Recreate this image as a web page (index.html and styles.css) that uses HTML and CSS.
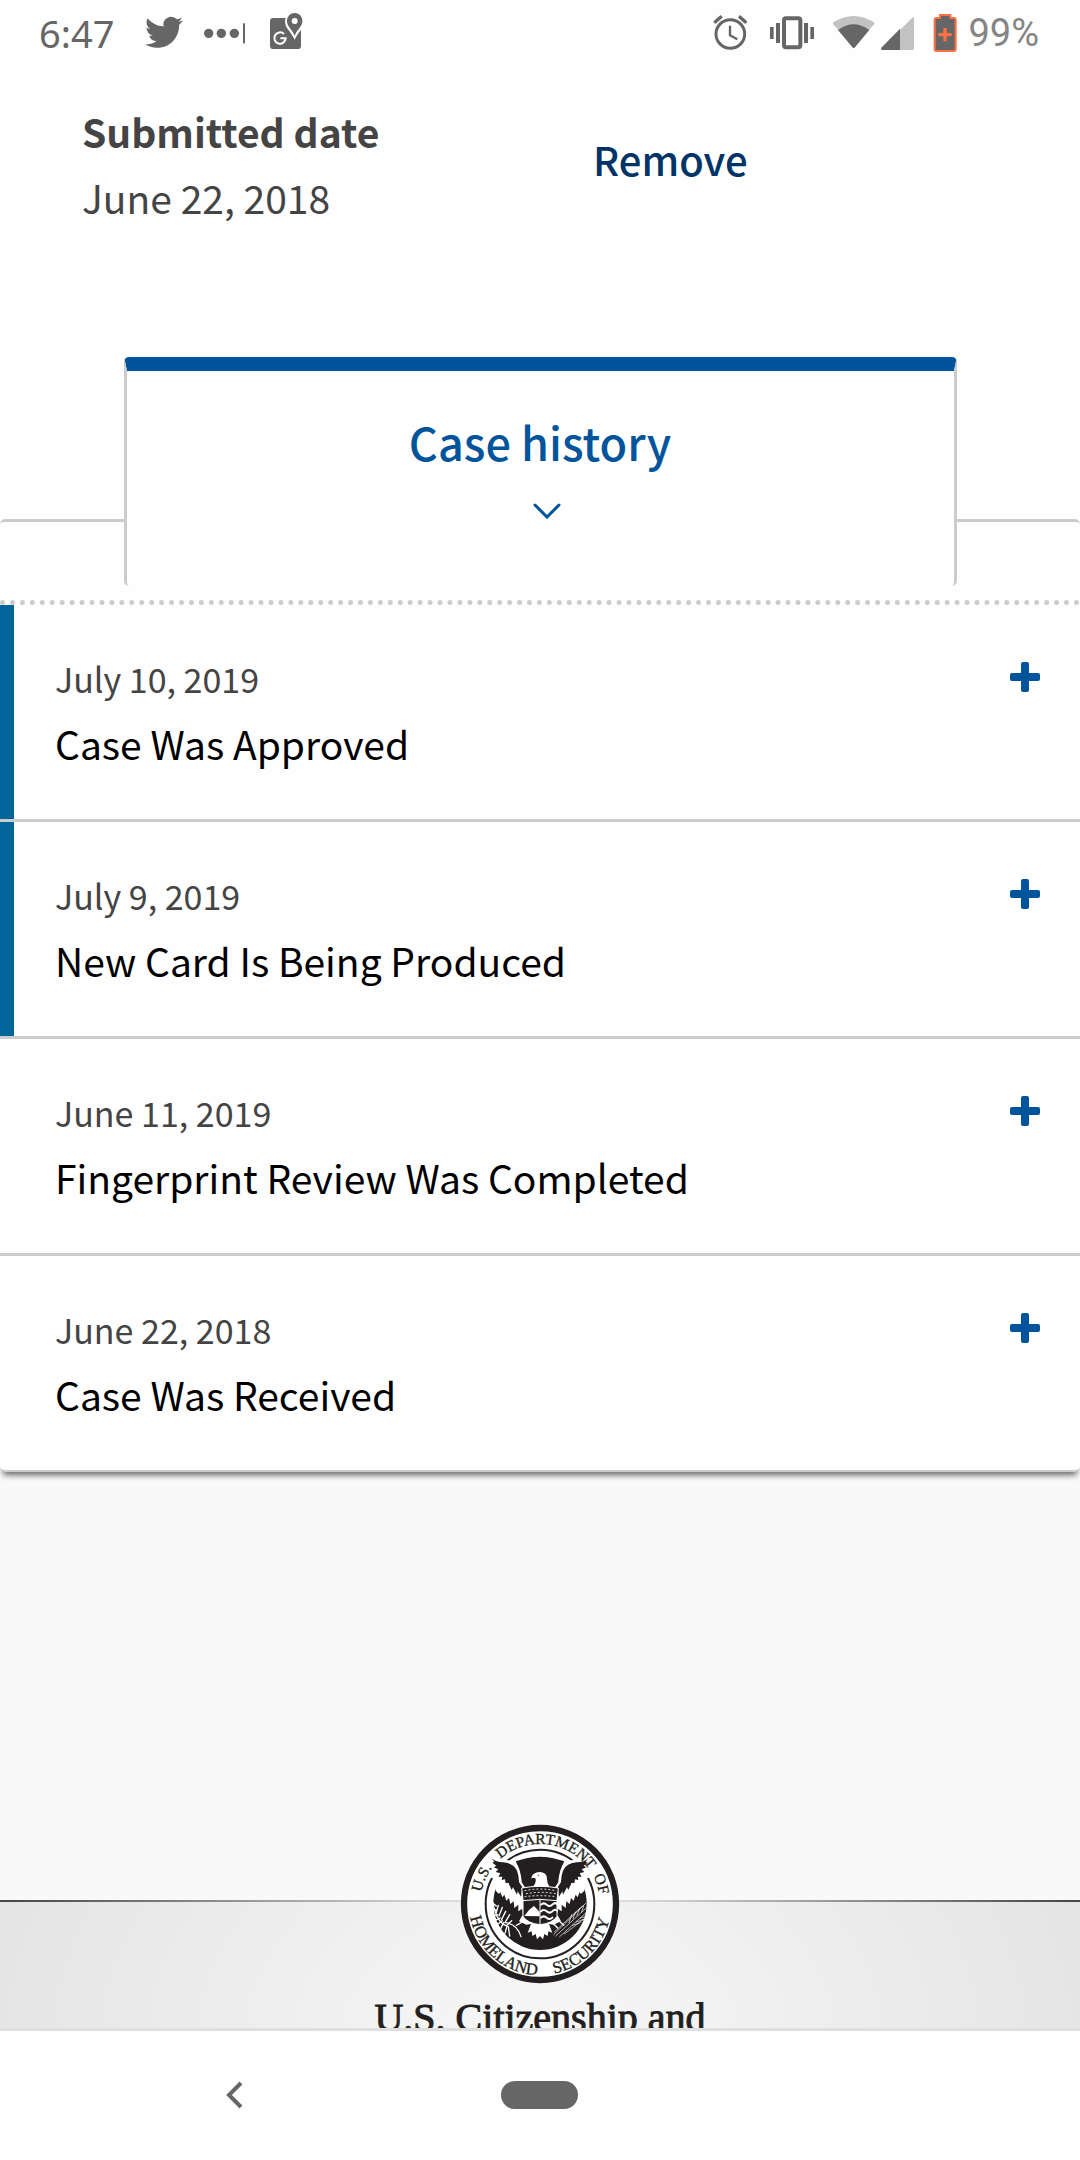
FILE: index.html
```html
<!DOCTYPE html>
<html lang="en">
<head>
<meta charset="utf-8">
<meta name="viewport" content="width=device-width, initial-scale=1">
<title>Case status</title>
<link rel="stylesheet" href="styles.css">
</head>
<body>
<div class="status">
  <div class="status-group status-left">
    <span class="clock">6:47</span>
    <svg class="ico w50" viewBox="405 30 150 132"><path transform="translate(438 40) scale(4.75)" d="M23.953 4.57a10 10 0 01-2.825.775 4.958 4.958 0 002.163-2.723c-.951.555-2.005.959-3.127 1.184a4.92 4.92 0 00-8.384 4.482C7.69 8.095 4.067 6.13 1.64 3.162a4.822 4.822 0 00-.666 2.475c0 1.71.87 3.213 2.188 4.096a4.904 4.904 0 01-2.228-.616v.06a4.923 4.923 0 003.946 4.827 4.996 4.996 0 01-2.212.085 4.936 4.936 0 004.604 3.417 9.867 9.867 0 01-6.102 2.105c-.39 0-.779-.023-1.17-.067a13.995 13.995 0 007.557 2.209c9.053 0 13.998-7.496 13.998-13.985 0-.21 0-.42-.015-.63A9.935 9.935 0 0024 4.59z"/></svg>
    <svg class="ico w42" viewBox="615 30 126 132"><circle cx="629" cy="100" r="14"/><circle cx="667" cy="100" r="14"/><circle cx="706" cy="100" r="14"/><rect x="732" y="70" width="6" height="60"/></svg>
    <svg class="ico w40" viewBox="801 30 120 132">
      <rect x="813" y="54" width="93" height="93" rx="10"/>
      <path class="knock" d="M887 34a28 28 0 0 0-29 29c0 22 15 28 29 56 14-28 29-34 29-56a28 28 0 0 0-29-29z"/>
      <path d="M887 39a23 23 0 0 0-23 24c0 18 14 22 23 44 9-22 23-26 23-44a23 23 0 0 0-23-24z"/>
      <circle class="knock" cx="887" cy="63" r="9"/>
      <path class="cut" d="M855 102a17 17 0 1 0 5 13h-16"/>
    </svg>
  </div>
  <div class="status-group status-right">
    <svg class="ico w50" viewBox="198 30 150 132"><g class="line"><circle cx="271" cy="102" r="43" stroke-width="9"/><path stroke-width="7" d="M270 77v29l22 12"/><path stroke-width="10" d="M223 68l22-19M319 68l-22-19"/></g></svg>
    <svg class="ico w56" viewBox="372 30 168 132"><rect class="line" x="432" y="55" width="49" height="87" rx="6" stroke-width="12"/><path d="M408 69h12v60h-12zM390 81h11v36h-11zM492 69h12v60h-12zM511 81h11v36h-11z"/></svg>
    <svg class="ico w90" viewBox="564 30 270 132"><path class="dim" d="M579 72Q577 68 581 66Q641 30 701 66Q705 68 703 72L686 91H596z"/><path d="M594 90Q641 56 688 90L645 142Q641 147 637 142z"/><path class="dim" d="M780 90L818 52Q822 50 822 55V145Q822 150 817 150H780z"/><path d="M780 86V150H726Q721 149 724 143z"/></svg>
    <svg class="ico w34" viewBox="858 30 102 132"><path class="batt" d="M900 45h31v9h11q5 0 5 5v89q0 5-5 5h-53q-5 0-5-5V59q0-5 5-5h11z"/><path class="spark" d="M910 84h10v15h15v10h-15v15h-10v-15h-15V99h15z"/></svg>
    <span class="percent">99%</span>
  </div>
</div>

<main class="screen">
  <section class="case">
    <div class="summary">
      <dl class="submitted"><dt>Submitted date</dt><dd>June 22, 2018</dd></dl>
      <button class="remove" type="button">Remove</button>
    </div>
    <div class="panel">
      <button class="tab" type="button" aria-expanded="true">
        <span>Case history</span>
        <svg class="chevron" viewBox="0 0 28 16"><path d="M2 2l12 12L26 2"/></svg>
      </button>
      <ul class="history">
        <li class="entry recent"><button class="toggle" type="button"><span class="text"><span class="date">July 10, 2019</span><span class="event">Case Was Approved</span></span><svg class="plus" viewBox="0 0 30 30"><path d="M13 0h4q2 0 2 2v9h9q2 0 2 2v4q0 2-2 2h-9v9q0 2-2 2h-4q-2 0-2-2v-9H2q-2 0-2-2v-4q0-2 2-2h9V2q0-2 2-2z"/></svg></button></li>
        <li class="entry recent"><button class="toggle" type="button"><span class="text"><span class="date">July 9, 2019</span><span class="event">New Card Is Being Produced</span></span><svg class="plus" viewBox="0 0 30 30"><path d="M13 0h4q2 0 2 2v9h9q2 0 2 2v4q0 2-2 2h-9v9q0 2-2 2h-4q-2 0-2-2v-9H2q-2 0-2-2v-4q0-2 2-2h9V2q0-2 2-2z"/></svg></button></li>
        <li class="entry"><button class="toggle" type="button"><span class="text"><span class="date">June 11, 2019</span><span class="event">Fingerprint Review Was Completed</span></span><svg class="plus" viewBox="0 0 30 30"><path d="M13 0h4q2 0 2 2v9h9q2 0 2 2v4q0 2-2 2h-9v9q0 2-2 2h-4q-2 0-2-2v-9H2q-2 0-2-2v-4q0-2 2-2h9V2q0-2 2-2z"/></svg></button></li>
        <li class="entry"><button class="toggle" type="button"><span class="text"><span class="date">June 22, 2018</span><span class="event">Case Was Received</span></span><svg class="plus" viewBox="0 0 30 30"><path d="M13 0h4q2 0 2 2v9h9q2 0 2 2v4q0 2-2 2h-9v9q0 2-2 2h-4q-2 0-2-2v-9H2q-2 0-2-2v-4q0-2 2-2h9V2q0-2 2-2z"/></svg></button></li>
      </ul>
    </div>
  </section>

  <footer class="footer">
    <svg class="seal" viewBox="63 72 480 480" role="img" aria-label="U.S. Department of Homeland Security seal">
      <defs>
        <path id="arc-top" d="M123 312A180 180 0 0 1 483 312"/>
        <path id="arc-bottom" d="M90 312A213 213 0 0 0 516 312"/>
      </defs>
      <circle class="paper ring" cx="303" cy="312" r="228" stroke-width="19"/>
      <circle class="none ring" cx="303" cy="312" r="163" stroke-width="6"/>
      <circle class="ink" cx="303" cy="310" r="140"/>
      <!-- lower wings -->
      <path class="paper" d="M150 168L138 226L164 236L170 272L180 282L184 276L190 292L196 284L202 302L210 294L214 312L224 304L226 324L238 314L238 334L250 326L252 346L262 350L262 250L236 190z"/>
      <path class="paper" d="M456 168L468 226L442 236L436 272L426 282L422 276L416 292L410 284L404 302L396 294L392 312L382 304L380 324L368 314L368 334L356 326L354 346L344 350L344 250L370 190z"/>
      <!-- upper wings -->
      <path class="ink" d="M157 174Q172 187 192 187Q224 189 234 212Q240 228 240 246L250 262L246 290L236 274L234 284L222 262L218 270L208 248L200 250L198 238L188 240L190 230L178 230L184 220L170 216L178 208L164 202L172 197L160 188L166 185z"/>
      <path class="ink" d="M449 174Q434 187 414 187Q382 189 372 212Q366 228 366 246L356 262L360 290L370 274L372 284L384 262L388 270L398 248L406 250L408 238L418 240L416 230L428 230L422 220L436 216L428 208L442 202L434 197L446 188L440 185z"/>
      <path class="ink" d="M230 184Q302 158 376 184Q362 208 362 246L350 262H256L244 246Q244 208 230 184z"/>
      <path class="white-line" d="M192 182Q230 182 239 210Q245 230 246 248L254 260M414 182Q376 182 367 210Q361 230 360 248L352 260" stroke-width="5"/>
      <!-- head -->
      <path class="paper" d="M278 230Q284 216 304 216Q324 218 324 236Q324 250 332 262H280Q292 250 290 236Q282 230 277 236z"/>
      <circle class="ink" cx="298" cy="226" r="2"/>
      <!-- shield -->
      <path class="ink paper-edge" d="M248 264Q303 254 358 264L354 300V350Q340 370 303 374Q266 370 252 350V300z"/>
      <path class="white-line" stroke-width="3" stroke-dasharray="3 9" d="M258 272Q303 262 350 272M262 281Q303 273 350 281M258 290Q303 284 350 290"/>
      <path class="white-line" stroke-width="3" d="M250 302Q303 294 356 302M303 300V374"/>
      <path class="paper" d="M256 348L270 330L285 318L302 336V349z"/>
      <path class="white-line" stroke-width="6" d="M306 314Q314 306 323 314T340 314T354 312M306 334Q314 326 323 334T340 334T354 332M306 353Q314 345 323 353T340 353"/>
      <!-- tail and legs -->
      <path class="paper" d="M250 346L240 364L262 374L276 372L266 398L278 394L280 408L290 402L294 418L303 408L312 418L316 402L326 408L328 394L340 398L330 372L344 374L366 364L356 346Q340 372 303 374Q266 372 250 346z"/>
      <path class="white-line" stroke-width="4" d="M200 368Q236 374 246 410M232 376L250 366M360 362L374 376M344 372L356 384"/>
      <!-- olive branch -->
      <path class="white-line" stroke-width="4" d="M162 308Q172 368 204 378M162 310L172 318M160 328L172 330M162 348L176 344M166 362L184 354M172 376L190 362M184 388L194 368M198 400L204 378M212 408L208 380M178 316L172 338M190 322L180 348M200 334L188 358M212 344L198 368M218 362L204 376"/>
      <!-- arrows -->
      <path class="white-line" stroke-width="2" d="M344 404L440 310M350 408L446 320M362 410L450 330M346 396L430 318M376 402L452 344M398 344L390 368M410 336L402 356M422 326L414 346M434 318L428 336M400 376L424 368M412 366L438 356M424 354L450 346"/>
      <g class="seal-text">
        <text font-size="46"><textPath href="#arc-top" startOffset="76">U.S.</textPath></text>
        <text font-size="46"><textPath href="#arc-top" startOffset="304">DEPARTMENT</textPath></text>
        <text font-size="46"><textPath href="#arc-top" startOffset="508">OF</textPath></text>
        <text font-size="50"><textPath href="#arc-bottom" startOffset="183">HOMELAND</textPath></text>
        <text font-size="50"><textPath href="#arc-bottom" startOffset="500">SECURITY</textPath></text>
      </g>
    </svg>
    <p class="agency">U.S. Citizenship and</p>
  </footer>
</main>

<nav class="navbar">
  <button class="nav-button" type="button" aria-label="Back"><svg class="back" viewBox="0 0 18 28"><path d="M15 2L3 14L15 26"/></svg></button>
  <button class="nav-button" type="button" aria-label="Home"><span class="pill"></span></button>
</nav>
</body>
</html>
```
FILE: styles.css
```css
* { box-sizing: border-box; }

body {
  margin: 0;
  height: 100vh;
  display: flex;
  flex-direction: column;
  background: #fefefe;
  color: #444;
  font-family: "Noto Sans CJK JP", "Noto Sans", sans-serif;
}

button {
  margin: 0;
  padding: 0;
  border: 0;
  background: none;
  color: inherit;
  font: inherit;
  text-align: left;
}

/* Status bar */
.status {
  display: flex;
  justify-content: space-between;
  padding: 10px 41px 18px 39px;
  color: #666;
}
.status-group { display: flex; align-items: center; height: 44px; }
.status-left { gap: 20px; }
.status-right { gap: 8px; }
.clock { font: 400 38px/44px "Noto Sans", sans-serif; }
.percent { font: 400 38px/44px Roboto, sans-serif; color: #858585; }
.clock, .percent { padding-top: 2px; }
.ico { height: 44px; fill: #666; }
.w34 { width: 34px; }
.w40 { width: 40px; }
.w42 { width: 42px; }
.w50 { width: 50px; }
.w56 { width: 56px; }
.w90 { width: 90px; }
.knock { fill: #fefefe; }
.cut { fill: none; stroke: #fefefe; stroke-width: 6; }
.line { fill: none; stroke: #666; }
.dim { fill: #c2c2c2; }
.batt { stroke: #ff7043; stroke-width: 6; }
.spark { fill: #ff7043; }

/* Case card */
.screen { flex: 1; min-height: 0; overflow: hidden; background: #f9f9f9; }
.case { background: #fefefe; }
.summary {
  display: grid;
  grid-template-columns: 1fr 1fr;
  gap: 24px;
  align-items: center;
  padding: 26px 0 0 82px;
  font-size: 39px;
  line-height: 66px;
}
.submitted { margin: 0; }
.submitted dt { font-weight: 700; }
.submitted dd { margin: 0; }
.remove { justify-self: start; color: #003366; font-size: 40px; font-weight: 500; padding-bottom: 10px; }

.panel {
  margin-top: 289px;
  border-top: 3px solid #ccc;
  border-bottom: 2px solid #ccc;
  border-radius: 5px;
  background: #fefefe;
  box-shadow: 0 6px 6px -3px rgba(0, 0, 0, 0.6);
}
.tab {
  display: flex;
  flex-direction: column;
  align-items: center;
  gap: 28px;
  width: calc(100% - 247px);
  margin: -165px auto 14px;
  padding: 38px 0 67px;
  border: solid #ccc;
  border-width: 14px 3px 0;
  border-top-color: #00549b;
  border-radius: 5px;
  background: #fefefe;
  color: #00549b;
  font-size: 45px;
  font-weight: 500;
  line-height: 66px;
}
.chevron { width: 28px; height: 16px; margin-left: 14px; fill: none; stroke: #00549b; stroke-width: 3; stroke-linecap: round; }

.history { margin: 0; padding: 0; list-style: none; border-top: 5px dotted #ccc; }
.entry + .entry { border-top: 3px solid #ccc; }
.toggle {
  display: flex;
  justify-content: space-between;
  align-items: flex-start;
  width: 100%;
  padding: 42px 40px 44px 55px;
  line-height: 64px;
}
.recent .toggle { border-left: 14px solid #006699; padding-left: 41px; }
.text { display: flex; flex-direction: column; }
.date { font-size: 34px; }
.event { font-size: 39px; color: #000; }
.plus { width: 30px; height: 30px; margin-top: 15px; fill: #00549b; }

/* Footer */
.footer {
  display: flex;
  flex-direction: column;
  align-items: center;
  height: 400px;
  margin-top: 428px;
  border-top: 2px solid;
  border-image: linear-gradient(90deg, #444, #ddd 42%, #ddd 58%, #444) 1;
  background: radial-gradient(ellipse 640px 520px at 50% 40%, #f8f8f8, #e2e2e2);
}
.seal { width: 160px; height: 160px; margin-top: -78px; flex: none; }
.agency {
  margin: 10px 0 0;
  color: #231f20;
  font: 400 40px/48px "Liberation Serif", serif;
  -webkit-text-stroke: 1px #231f20;
}
.ink { fill: #231f20; }
.paper { fill: #fff; }
.none { fill: none; }
.ring { stroke: #231f20; }
.paper-edge { stroke: #fff; stroke-width: 3; }
.white-line { fill: none; stroke: #fff; stroke-linecap: round; }
.seal-text { fill: #231f20; stroke: #231f20; stroke-width: 1; font-family: "Liberation Serif", serif; text-anchor: middle; }

/* System navigation */
.navbar {
  display: grid;
  grid-template-columns: repeat(3, 1fr);
  align-items: center;
  height: 132px;
  padding: 0 82px 2px;
  border-top: 3px solid #dfdfdf;
  background: #fefefe;
}
.nav-button { display: flex; justify-content: center; }
.back { width: 18px; height: 28px; fill: none; stroke: #666; stroke-width: 4; }
.pill { width: 77px; height: 28px; border-radius: 14px; background: #666; }
```
